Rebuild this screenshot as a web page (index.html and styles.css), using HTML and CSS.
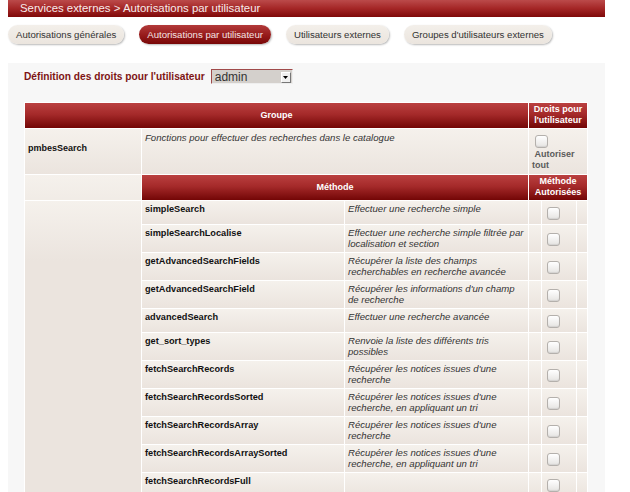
FILE: index.html
```html
<!DOCTYPE html>
<html lang="fr">
<head>
<meta charset="utf-8">
<title>Autorisations par utilisateur</title>
<link rel="stylesheet" href="styles.css">
</head>
<body>
<div class="page">
  <div class="titlebar">Services externes &gt; Autorisations par utilisateur</div>
  <nav class="tabs">
    <span class="tab">Autorisations générales</span>
    <span class="tab active">Autorisations par utilisateur</span>
    <span class="tab">Utilisateurs externes</span>
    <span class="tab">Groupes d'utilisateurs externes</span>
  </nav>
  <div class="panel">
    <div class="userline">
      <span class="label">Définition des droits pour l'utilisateur</span>
      <div class="select">
        <span class="value">admin</span>
        <span class="arrow"><svg width="5" height="3" viewBox="0 0 5 3"><polygon points="0,0 5,0 2.5,3" fill="#000"/></svg></span>
      </div>
    </div>
    <table class="rights">
      <colgroup>
        <col class="c1"><col class="c2"><col class="c3"><col class="c4"><col class="c5"><col class="c6">
      </colgroup>
      <tr>
        <th colspan="3" class="hd">Groupe</th>
        <th colspan="3" class="hd two">Droits pour l'utilisateur</th>
      </tr>
      <tr class="group">
        <td class="gname">pmbesSearch</td>
        <td colspan="2" class="desc gdesc">Fonctions pour effectuer des recherches dans le catalogue</td>
        <td colspan="3" class="all"><input type="checkbox" class="cb block"><span class="alltext">&nbsp;Autoriser tout</span></td>
      </tr>
      <tr>
        <td class="blank"></td>
        <th colspan="2" class="hd">Méthode</th>
        <th colspan="3" class="hd two">Méthode Autorisées</th>
      </tr>
      <tr>
        <td class="blank" rowspan="11"></td>
        <td class="name">simpleSearch</td>
        <td class="desc">Effectuer une recherche simple</td>
        <td></td><td class="chk"><input type="checkbox" class="cb"></td><td></td>
      </tr>
      <tr>
        <td class="name">simpleSearchLocalise</td>
        <td class="desc">Effectuer une recherche simple filtrée par localisation et section</td>
        <td></td><td class="chk"><input type="checkbox" class="cb"></td><td></td>
      </tr>
      <tr>
        <td class="name">getAdvancedSearchFields</td>
        <td class="desc">Récupérer la liste des champs recherchables en recherche avancée</td>
        <td></td><td class="chk"><input type="checkbox" class="cb"></td><td></td>
      </tr>
      <tr>
        <td class="name">getAdvancedSearchField</td>
        <td class="desc">Récupérer les informations d'un champ de recherche</td>
        <td></td><td class="chk"><input type="checkbox" class="cb"></td><td></td>
      </tr>
      <tr>
        <td class="name">advancedSearch</td>
        <td class="desc">Effectuer une recherche avancée</td>
        <td></td><td class="chk"><input type="checkbox" class="cb"></td><td></td>
      </tr>
      <tr>
        <td class="name">get_sort_types</td>
        <td class="desc">Renvoie la liste des différents tris possibles</td>
        <td></td><td class="chk"><input type="checkbox" class="cb"></td><td></td>
      </tr>
      <tr>
        <td class="name">fetchSearchRecords</td>
        <td class="desc">Récupérer les notices issues d'une recherche</td>
        <td></td><td class="chk"><input type="checkbox" class="cb"></td><td></td>
      </tr>
      <tr>
        <td class="name">fetchSearchRecordsSorted</td>
        <td class="desc">Récupérer les notices issues d'une recherche, en appliquant un tri</td>
        <td></td><td class="chk"><input type="checkbox" class="cb"></td><td></td>
      </tr>
      <tr>
        <td class="name">fetchSearchRecordsArray</td>
        <td class="desc">Récupérer les notices issues d'une recherche</td>
        <td></td><td class="chk"><input type="checkbox" class="cb"></td><td></td>
      </tr>
      <tr>
        <td class="name">fetchSearchRecordsArraySorted</td>
        <td class="desc">Récupérer les notices issues d'une recherche, en appliquant un tri</td>
        <td></td><td class="chk"><input type="checkbox" class="cb"></td><td></td>
      </tr>
      <tr>
        <td class="name">fetchSearchRecordsFull</td>
        <td class="desc"></td>
        <td></td><td class="chk"><input type="checkbox" class="cb"></td><td></td>
      </tr>
    </table>
  </div>
</div>
</body>
</html>
```
FILE: styles.css
```css
html, body {
  margin: 0;
  padding: 0;
  background: #ffffff;
}
body {
  padding: 0 8px;
  font-family: "Liberation Sans", Arial, sans-serif;
  color: #222;
}
.page {
  width: 597px;
}
.titlebar {
  height: 17px;
  line-height: 17px;
  padding-left: 12px;
  font-size: 11.4px;
  color: #f6ecec;
  background: linear-gradient(to bottom, #bb4a4a 0%, #a42626 50%, #7f0909 100%);
}
.tabs {
  display: flex;
  gap: 15px;
  margin-top: 8px;
  height: 20px;
}
.tab {
  display: inline-block;
  height: 19px;
  line-height: 19px;
  padding: 0 8px;
  font-size: 9.6px;
  color: #333;
  border-radius: 10px;
  background: linear-gradient(to bottom, #f3efea 0%, #ebe5de 100%);
  box-shadow: 1px 1px 2px rgba(0, 0, 0, 0.28);
}
.tab.active {
  color: #f4e4e4;
  background: linear-gradient(to bottom, #b23a3a 0%, #961a1a 55%, #780707 100%);
}
.panel {
  margin-top: 18px;
  background: #f7f7f7;
  padding: 6px 16px 40px 16px;
}
.userline {
  display: flex;
  align-items: center;
  gap: 6px;
  height: 15px;
}
.label {
  font-size: 10.2px;
  font-weight: bold;
  color: #7e1414;
}
.select {
  display: flex;
  align-items: center;
  justify-content: space-between;
  width: 76px;
  height: 12px;
  padding: 1px 1px 0 3px;
  background: #d4d0cc;
  border-top: 1px solid #a04a4a;
  border-left: 1px solid #a04a4a;
  border-right: 1px solid #eeeeee;
  border-bottom: 1px solid #eeeeee;
  font-size: 12px;
  color: #333;
}
.select .value {
  line-height: 12px;
}
.select .arrow {
  display: flex;
  align-items: center;
  justify-content: center;
  width: 10px;
  height: 11px;
  background: #f0f0f0;
  border-top: 1px solid #ffffff;
  border-left: 1px solid #ffffff;
  border-right: 1px solid #777;
  border-bottom: 1px solid #777;
  box-sizing: border-box;
}
.rights {
  margin-top: 18px;
  border-collapse: separate;
  border-spacing: 1px;
  table-layout: fixed;
  width: 564px;
  background: #ffffff;
  font-size: 9px;
  line-height: 11px;
}
.c1 { width: 116px; }
.c2 { width: 202px; }
.c3 { width: 183px; }
.c4 { width: 12px; }
.c5 { width: 34px; }
.c6 { width: 10px; }
.rights td, .rights th {
  padding: 2px 3px 3px 3px;
  vertical-align: top;
  background: linear-gradient(to bottom, #f5f1ec 0%, #ebe4de 100%);
}
.rights th.hd {
  padding: 1px 2px 2px 2px;
  height: 22px;
  vertical-align: middle;
  text-align: center;
  font-weight: bold;
  color: #ffffff;
  background: linear-gradient(to bottom, #ba4040 0%, #a52a2a 45%, #730606 100%);
}
.rights td.blank {
  background: linear-gradient(to bottom, #f5f1ec 0%, #ebe4de 60px, #ebe4de 100%);
}
.gname {
  vertical-align: middle !important;
  padding-bottom: 9px !important;
  font-weight: bold;
  color: #111;
}
.gdesc {
  padding-top: 3px !important;
}
.desc {
  font-style: italic;
  font-size: 9.6px;
  color: #333;
  padding-right: 2px !important;
}
.name {
  font-weight: bold;
  font-size: 9.2px;
  color: #111;
  padding-top: 3px !important;
  padding-bottom: 2px !important;
}
.all {
  padding: 3px 3px 3px 3px !important;
}
.alltext {
  font-weight: bold;
  color: #5a5a5a;
}
.rights td.chk {
  vertical-align: middle;
  padding: 2px;
}
.cb {
  appearance: none;
  -webkit-appearance: none;
  display: block;
  width: 13px;
  height: 13px;
  margin: 4px 0 2px 3px;
  box-sizing: border-box;
  border: 1px solid #b4b0ac;
  border-radius: 3px;
  background: linear-gradient(to bottom, #ffffff 0%, #e6e4e2 100%);
  box-shadow: inset 0 -1px 1px rgba(0, 0, 0, 0.08);
}
.cb.block {
  margin: 3px 0 1px 3px;
}
```
